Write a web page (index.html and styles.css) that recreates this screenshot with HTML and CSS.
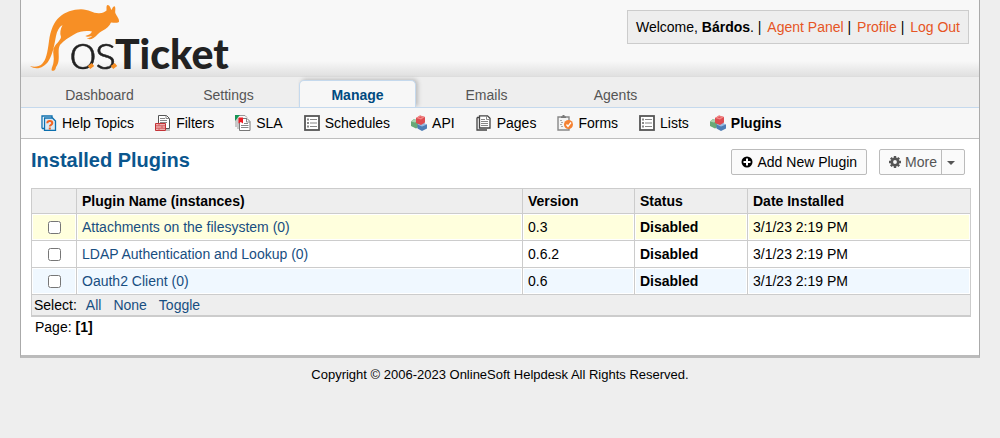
FILE: index.html
```
<!DOCTYPE html>
<html lang="en">
<head>
    <meta charset="UTF-8">
    <meta name="viewport" content="width=device-width, initial-scale=1.0">
    <title>osTicket :: Plugins</title>
    <link rel="stylesheet" href="styles.css">
</head>
<body>
    <svg class="sprites" width="0" height="0" aria-hidden="true">
        <symbol id="icon-list" viewBox="0 0 16 16">
            <rect x="1" y="1" width="14" height="14" fill="#fff" stroke="#555" stroke-width="1.8"/>
            <path d="M3 4.500h2M3 8h2M3 11.500h2" stroke="#888" stroke-width="2"/>
            <path d="M6 4.500h7M6 8h7M6 11.500h7" stroke="#888" stroke-width="1.2"/>
        </symbol>
        <symbol id="icon-blocks" viewBox="0 0 16 16">
            <path d="M0 6.500l3-2.500 5 2v6l-3 1.500-5-2.500z" fill="#68a878"/>
            <path d="M0 6.500l3-2.500 4 2-3 1.500z" fill="#a9d2b0"/>
            <path d="M6.500 9.500l4-2 5.500 2v4l-5 2.500-4.500-2.500z" fill="#4d7db5"/>
            <path d="M6.500 9.500l4-2 5.500 2-5 2z" fill="#98bce2"/>
            <path d="M5 3l4-2.500 5 1.500v5.500l-4 2.500-5-2z" fill="#dd4b50"/>
            <path d="M5 3l4-2.500 5 1.500-4 2.500z" fill="#f28a88"/>
            <path d="M7.500 2.500l2-1 2 .6-2 1z" fill="#e35358"/>
        </symbol>
    </svg>

    <div class="container">
        <header class="header">
            <a class="logo" href="#" aria-label="osTicket">
                <svg width="200" height="70" viewBox="0 0 200 70">
                    <path fill="#f78f25" d="M0 61C5 62.500 9 61.500 12 59 16 55 17.500 48 19 36 20.500 25 24 17 29 12.500 35 7 43 4.300 51 4.300 59 4.300 63 8.500 69 8.300 73 8.300 75.500 6.500 76.500 5.500 76.700 3 76 .5 77.500 0 79.500-.3 80.500 3 81.500 5 82.500 3.500 83 1 84.500 1.300 86 2.500 85 5.500 85.300 8 86.500 11 89.500 14 89 16.700 88 18.500 84 17.500 81 17.500 79.500 21 76.500 24 72 26 68.500 27.500 67 31 63.500 33 61 34.500 58 34.500 57 33.300 59 32.800 61 32.500 62 31 59.500 31.500 57 32.500 55.300 31 58 30.300 61 29 62 26.500 56 25.500 50 26 44 29.500 39 32.500 34 35 30 40 27.500 44 29.500 51 28.500 56 28 60 26 61 25.500 64 24.500 66 22 66.500 21.500 65 21.500 62 23.500 60 23.500 57 24.500 53 22.500 48 23.500 44 25 39 30.500 36 31 32 29.500 28 30.500 24 32.500 20 29 22 27 26 26 31 24.500 39 23 49 18.500 56 14 63 6 65.500 0 61z"/>
                    <text class="logo-thin" x="39" y="64">o</text>
                    <text class="logo-thin" x="65" y="64">s</text>
                    <text class="logo-bold" x="85" y="64">Ticket</text>
                    <path d="M59 62.500l4-3M82 62.500l4-3" stroke="#f78f25" stroke-width="4"/>
                </svg>
            </a>
            <p class="info">
                Welcome, <strong>Bárdos</strong>.
                | <a href="#">Agent Panel</a>
                | <a href="#">Profile</a>
                | <a href="#">Log Out</a>
            </p>
        </header>

        <nav class="nav">
            <a class="tab" href="#">Dashboard</a>
            <a class="tab" href="#">Settings</a>
            <a class="tab active" href="#">Manage</a>
            <a class="tab" href="#">Emails</a>
            <a class="tab" href="#">Agents</a>
        </nav>

        <nav class="sub-nav">
            <a href="#">
                <svg class="icon" viewBox="0 0 16 16"><path d="M1 13.500V1h10v2M1 13.500h2" fill="#fff" stroke="#0b6fae" stroke-width="1.300"/><path d="M3.500 3h8l3 3v9.300h-11z" fill="#dce9f2" stroke="#0b6fae" stroke-width="1.300"/><path d="M6.300 8.200c0-3 5-3 5 0 0 1.800-2.500 1.500-2.500 3.300M8.800 12.500v2" fill="none" stroke="#f26522" stroke-width="2"/></svg>
                Help Topics
            </a>
            <a href="#">
                <svg class="icon" viewBox="0 0 16 16"><path d="M3.500 8V.5h8l3 3v10H11" fill="#fff" stroke="#555"/><path d="M11 .5v3h3.500M5 3.500h5M5 5.500h7M5 7.500h7M11 15h4" fill="none" stroke="#888"/><path d="M.5 8.500h10v7H.5z" fill="#f0b0b0" stroke="#c33236"/><path d="M1 10.800h9M1 13.200h9M4 8.500v2M7 11v2M4 13.500v2" stroke="#d05a5c"/></svg>
                Filters
            </a>
            <a href="#">
                <svg class="icon" viewBox="0 0 16 16"><path d="M1 12V.5h9l2 2M3 14V3" fill="none" stroke="#999"/><path d="M0 0h5L0 6z" fill="#159455"/><path d="M4.500 3.500h7.500l3 3v9H4.500z" fill="#fff" stroke="#777"/><path d="M11.500 3.500v3.500H15M9 8.500h4M6 10.500h7.500M6 12.500h7.500" fill="none" stroke="#888"/><path d="M3.500 2.500h4.500v6L5.800 7 3.500 8.500z" fill="#ed1c24"/></svg>
                SLA
            </a>
            <a href="#"><svg class="icon"><use href="#icon-list"/></svg>Schedules</a>
            <a href="#"><svg class="icon"><use href="#icon-blocks"/></svg>API</a>
            <a href="#">
                <svg class="icon" viewBox="0 0 16 16"><path d="M1 2.500V15h10M1 2.500h2" fill="none" stroke="#444" stroke-width="1.300"/><path d="M3.500 13V.8h8l2.500 2.500V13z" fill="#fff" stroke="#444" stroke-width="1.300"/><path d="M10.500 1v3.500H14M5 4.500h4M5 6.500h7M5 8.500h7M5 10.500h7" fill="none" stroke="#888"/></svg>
                Pages
            </a>
            <a href="#">
                <svg class="icon" viewBox="0 0 16 16"><path d="M1 2h11v13H1z" fill="#f5f5f5" stroke="#888" stroke-width="1.400"/><path d="M4 3V1.500h1.500V0h2v1.500H9V3z" fill="#777"/><path d="M3 5.500h2M4 7.500h2M3 9.500h2M4 11.500h2" stroke="#aaa"/><circle cx="11.500" cy="9.500" r="4.500" fill="#f58233"/><path d="M9.500 9.500l1.500 2 3-4" fill="none" stroke="#fff" stroke-width="1.300"/></svg>
                Forms
            </a>
            <a href="#"><svg class="icon"><use href="#icon-list"/></svg>Lists</a>
            <a class="active" href="#"><svg class="icon"><use href="#icon-blocks"/></svg>Plugins</a>
        </nav>

        <main class="content">
            <div class="title-bar">
                <h1>Installed Plugins</h1>
                <div class="actions">
                    <button class="button" type="button">
                        <svg width="12" height="12" viewBox="0 0 12 12"><circle cx="6" cy="6" r="5.500"/><path d="M6 2.500v7M2.500 6h7" stroke="#fff" stroke-width="2"/></svg>
                        Add New Plugin
                    </button>
                    <button class="button more" type="button">
                        <svg width="12" height="12" viewBox="0 0 12 12"><circle cx="6" cy="6" r="3.200" fill="none" stroke="#555" stroke-width="2.600"/><path d="M6 0v2M6 10v2M0 6h2M10 6h2M1.800 1.800l1.400 1.400M8.800 8.800l1.400 1.400M1.800 10.200l1.400-1.400M8.800 3.200l1.400-1.400" stroke="#555" stroke-width="2.400"/></svg>
                        More
                        <span class="caret"><svg width="8" height="4" viewBox="0 0 8 4"><path d="M0 0h8L4 4z" fill="#555"/></svg></span>
                    </button>
                </div>
            </div>

            <table class="list">
                <colgroup>
                    <col class="col-check">
                    <col>
                    <col class="col-version">
                    <col class="col-status">
                    <col class="col-date">
                </colgroup>
                <thead>
                    <tr>
                        <th></th>
                        <th>Plugin Name (instances)</th>
                        <th>Version</th>
                        <th>Status</th>
                        <th>Date Installed</th>
                    </tr>
                </thead>
                <tbody>
                    <tr class="highlight">
                        <td class="check"><input type="checkbox" aria-label="Attachments on the filesystem"></td>
                        <td><a href="#">Attachments on the filesystem (0)</a></td>
                        <td>0.3</td>
                        <td><strong>Disabled</strong></td>
                        <td>3/1/23 2:19 PM</td>
                    </tr>
                    <tr>
                        <td class="check"><input type="checkbox" aria-label="LDAP Authentication and Lookup"></td>
                        <td><a href="#">LDAP Authentication and Lookup (0)</a></td>
                        <td>0.6.2</td>
                        <td><strong>Disabled</strong></td>
                        <td>3/1/23 2:19 PM</td>
                    </tr>
                    <tr class="odd">
                        <td class="check"><input type="checkbox" aria-label="Oauth2 Client"></td>
                        <td><a href="#">Oauth2 Client (0)</a></td>
                        <td>0.6</td>
                        <td><strong>Disabled</strong></td>
                        <td>3/1/23 2:19 PM</td>
                    </tr>
                </tbody>
                <tfoot>
                    <tr>
                        <td colspan="5">
                            <div class="select">
                                Select:
                                <a href="#">All</a>
                                <a href="#">None</a>
                                <a href="#">Toggle</a>
                            </div>
                        </td>
                    </tr>
                </tfoot>
            </table>
            <p class="pages">Page: <strong>[1]</strong></p>
        </main>
    </div>

    <footer class="footer">Copyright © 2006-2023 OnlineSoft Helpdesk All Rights Reserved.</footer>
</body>
</html>
```
FILE: styles.css
```
* {
    box-sizing: border-box;
}

body {
    margin: 0;
    background: #eee;
    color: #000;
    font-family: "Liberation Sans", Arial, sans-serif;
    font-size: 14px;
    line-height: 20px;
}

a {
    color: #184e81;
    text-decoration: none;
}

.sprites {
    display: block;
}

.container {
    margin: 0 20px;
    background: #fff;
    border: 1px solid #aaa;
    border-top: 0;
    border-bottom: 3px solid #bbb;
}

.header {
    display: flex;
    justify-content: space-between;
    align-items: flex-start;
    padding: 5px 10px 1px 9px;
    background: linear-gradient(#f8f8f8 80%, #e0e0e0);
    border-bottom: 1px solid #ddd;
}

.logo,
.logo svg {
    display: block;
    overflow: visible;
}

.logo-thin {
    font-family: Lato, sans-serif;
    font-size: 50px;
    font-weight: 300;
    fill: #222;
    stroke: #222;
    stroke-width: 0.5;
}

.logo-bold {
    font-family: Lato, sans-serif;
    font-size: 41px;
    font-weight: 900;
    fill: #222;
}

.info {
    margin: 5px 0 0;
    padding: 6px 8px;
    background: #eee;
    border: 1px solid #ccc;
}

.info a {
    margin-left: 2px;
    color: #e65524;
}

.nav {
    display: flex;
    gap: 12px;
    padding: 3px 20px 0;
    background: #eee;
    border-bottom: 1px solid #c5d9ed;
}

.tab {
    width: 117px;
    height: 27px;
    padding-top: 4px;
    border: 1px solid transparent;
    border-bottom: 0;
    color: #555;
    text-align: center;
}

.tab.active {
    margin-bottom: -1px;
    background: #f7f7f7;
    border-color: #c5d9ed;
    border-radius: 5px 5px 0 0;
    box-shadow: 2px -1px 4px #bbb;
    clip-path: inset(-5px -8px 0 -1px);
    color: #004a80;
    font-weight: bold;
}

.sub-nav {
    display: flex;
    gap: 21px;
    padding: 5px 20px;
    background: #f7f7f7;
    border-bottom: 1px solid #bebebe;
}

.sub-nav a {
    display: flex;
    align-items: center;
    gap: 5px;
    color: #000;
}

.sub-nav .active {
    font-weight: bold;
}

.icon {
    width: 16px;
    height: 16px;
}

.content {
    padding: 10px 8px 18px 10px;
}

.title-bar {
    display: flex;
    justify-content: space-between;
    align-items: flex-start;
    padding-right: 6px;
    margin-bottom: 13px;
}

h1 {
    margin: 0;
    color: #0a568e;
    font-size: 20px;
    line-height: 22px;
}

.actions {
    display: flex;
    gap: 12px;
}

.button {
    display: flex;
    align-items: center;
    gap: 4px;
    height: 26px;
    padding: 0 9px;
    background: #fafafa;
    border: 1px solid #bbb;
    border-radius: 2px;
    color: #000;
    font: inherit;
}

.more {
    padding-right: 0;
    color: #555;
}

.caret {
    display: flex;
    align-items: center;
    align-self: stretch;
    padding: 2px 9px 0 5px;
    border-left: 1px solid #bbb;
}

.list {
    width: 100%;
    table-layout: fixed;
    background: #ccc;
    border-spacing: 1px;
    border-bottom: 1px solid #ccc;
}

.col-check { width: 44px; }
.col-version { width: 111px; }
.col-status { width: 112px; }
.col-date { width: 222px; }

.list th {
    padding: 2px 5px;
    height: 24px;
    background: #eee;
    text-align: left;
}

.list td {
    padding: 2px 4px;
    background: #fff;
    border: 1px solid #fff;
}

.list .highlight td {
    background: #ffffdd;
}

.list .odd td {
    background: #f0f8ff;
}

.list .check {
    text-align: center;
}

.check input {
    display: block;
    width: 13px;
    height: 13px;
    margin: 0 auto;
}

.list tfoot td {
    padding: 0 2px;
    background: #eee;
    border: 0;
}

.select {
    display: flex;
    gap: 12px;
}

.select a:first-child {
    margin-left: -3px;
}

.pages {
    margin: 0;
    padding-left: 4px;
}

.footer {
    padding: 7px 10px;
    font-size: 13px;
    line-height: 20px;
    text-align: center;
}
```
